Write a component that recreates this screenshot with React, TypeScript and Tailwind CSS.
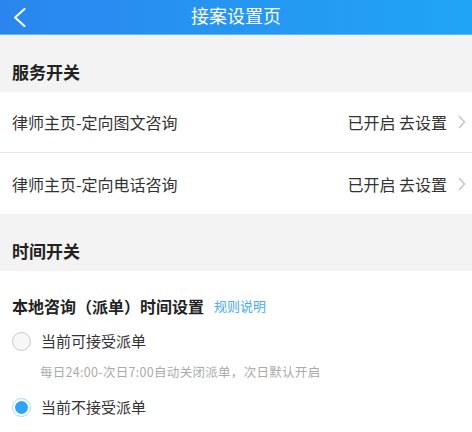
import React from 'react';

const font = { fontFamily: '"Noto Sans CJK SC", "Noto Sans", sans-serif' };

const SectionHeader = ({ title }: { title: string }) => (
  <div className="h-[57px] bg-[#f3f3f3] px-3 pt-[25px]">
    <h2 className="text-[17px] leading-[24px] font-bold text-[#222]">{title}</h2>
  </div>
);

const ServiceRow = ({ label, divider }: { label: string; divider?: boolean }) => (
  <div className={`flex h-[61px] items-center justify-between bg-white pl-3 pr-[6px] ${divider ? 'border-b border-[#e6e6e6]' : ''}`}>
    <span className="text-[16px] text-[#333]">{label}</span>
    <div className="flex items-center gap-[11px]">
      <span className="text-[16px] text-[#333]">已开启 去设置</span>
      <svg width="8" height="14" viewBox="0 0 8 14" fill="none">
        <path d="M1.5 1.5 L6.5 7 L1.5 12.5" stroke="#c4c4c4" strokeWidth="1.4" strokeLinecap="round" strokeLinejoin="round" />
      </svg>
    </div>
  </div>
);

const Radio = ({ checked, label }: { checked?: boolean; label: string }) => (
  <div className="flex h-[24px] items-center pl-3">
    {checked ? (
      <span className="flex h-[19px] w-[19px] items-center justify-center rounded-full border border-[#a9d8fb] bg-white">
        <span className="h-[13px] w-[13px] rounded-full bg-[#2ea3f7]" />
      </span>
    ) : (
      <span className="h-[19px] w-[19px] rounded-full border border-[#c9c9c9] bg-[#f7f7f7]" />
    )}
    <span className="ml-[10px] text-[15px] text-[#333]">{label}</span>
  </div>
);

const App = () => {
  return (
    <div className="w-[472px] h-[432px] overflow-hidden bg-white" style={font}>
      <header className="flex h-[35px] items-center bg-gradient-to-r from-[#2a86ee] to-[#20a5f6] border-b border-[#5cb9f7]">
        <div className="flex w-[60px] items-center pl-[13px]">
          <svg width="13" height="19" viewBox="0 0 13 19" fill="none">
            <path d="M11.5 1 L2 9.5 L11.5 18" stroke="#fff" strokeWidth="2" strokeLinecap="round" strokeLinejoin="round" />
          </svg>
        </div>
        <h1 className="flex-1 text-center text-[18px] leading-[24px] text-white -mt-[5px]">接案设置页</h1>
        <div className="w-[60px]" />
      </header>

      <SectionHeader title="服务开关" />
      <ServiceRow label="律师主页-定向图文咨询" divider />
      <ServiceRow label="律师主页-定向电话咨询" />

      <SectionHeader title="时间开关" />

      <div className="bg-white pt-[23px]">
        <div className="flex h-[24px] items-center pl-3">
          <span className="text-[16px] font-bold text-[#222]">本地咨询（派单）时间设置</span>
          <span className="ml-[10px] text-[13px] text-[#4aa9f2]">规则说明</span>
        </div>
        <div className="mt-[11px]">
          <Radio label="当前可接受派单" />
        </div>
        <p className="mt-[11px] pl-[40px] text-[12.5px] leading-[16px] tracking-[0.3px] text-[#aaa]">
          每日24:00-次日7:00自动关闭派单，次日默认开启
        </p>
        <div className="mt-[15px]">
          <Radio checked label="当前不接受派单" />
        </div>
      </div>
    </div>
  );
};

export default App;
